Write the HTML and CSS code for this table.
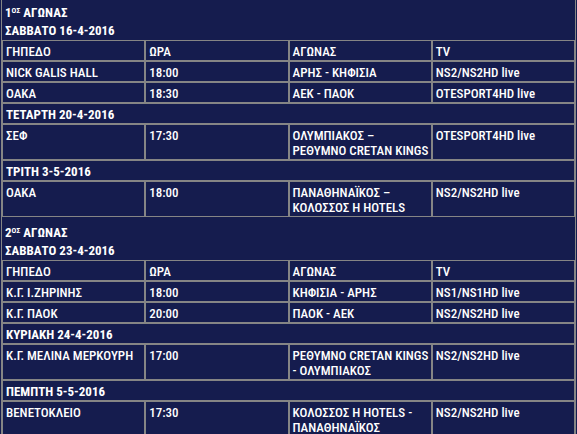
FILE: index.html
```html
<!DOCTYPE html>
<html lang="el">
<head>
<meta charset="utf-8">
<title>Πρόγραμμα αγώνων</title>
<link rel="stylesheet" href="styles.css">
</head>
<body>
<div class="page">
<table class="schedule">
  <colgroup><col><col><col><col></colgroup>
  <tbody>
    <tr class="round"><td colspan="4">1<sup>ΟΣ</sup> ΑΓΩΝΑΣ</td></tr>
    <tr class="day"><td colspan="4">ΣΑΒΒΑΤΟ 16-4-2016</td></tr>
    <tr><td>ΓΗΠΕΔΟ</td><td>ΩΡΑ</td><td>ΑΓΩΝΑΣ</td><td>TV</td></tr>
    <tr><td>NICK GALIS HALL</td><td>18:00</td><td>ΑΡΗΣ - ΚΗΦΙΣΙΑ</td><td>NS2/NS2HD live</td></tr>
    <tr><td>ΟΑΚΑ</td><td>18:30</td><td>ΑΕΚ - ΠΑΟΚ</td><td>OTESPORT4HD live</td></tr>
    <tr class="date"><td colspan="4">ΤΕΤΑΡΤΗ 20-4-2016</td></tr>
    <tr><td>ΣΕΦ</td><td>17:30</td><td>ΟΛΥΜΠΙΑΚΟΣ –<br>ΡΕΘΥΜΝΟ CRETAN KINGS</td><td>OTESPORT4HD live</td></tr>
    <tr class="date"><td colspan="4">ΤΡΙΤΗ 3-5-2016</td></tr>
    <tr><td>ΟΑΚΑ</td><td>18:00</td><td>ΠΑΝΑΘΗΝΑΪΚΟΣ –<br>ΚΟΛΟΣΣΟΣ Η HOTELS</td><td>NS2/NS2HD live</td></tr>
    <tr class="round"><td colspan="4">2<sup>ΟΣ</sup> ΑΓΩΝΑΣ</td></tr>
    <tr class="day"><td colspan="4">ΣΑΒΒΑΤΟ 23-4-2016</td></tr>
    <tr><td>ΓΗΠΕΔΟ</td><td>ΩΡΑ</td><td>ΑΓΩΝΑΣ</td><td>TV</td></tr>
    <tr><td>Κ.Γ. Ι.ΖΗΡΙΝΗΣ</td><td>18:00</td><td>ΚΗΦΙΣΙΑ - ΑΡΗΣ</td><td>NS1/NS1HD live</td></tr>
    <tr><td>Κ.Γ. ΠΑΟΚ</td><td>20:00</td><td>ΠΑΟΚ - ΑΕΚ</td><td>NS2/NS2HD live</td></tr>
    <tr class="date"><td colspan="4">ΚΥΡΙΑΚΗ 24-4-2016</td></tr>
    <tr><td>Κ.Γ. ΜΕΛΙΝΑ ΜΕΡΚΟΥΡΗ</td><td>17:00</td><td>ΡΕΘΥΜΝΟ CRETAN KINGS<br>- ΟΛΥΜΠΙΑΚΟΣ</td><td>NS2/NS2HD live</td></tr>
    <tr class="date"><td colspan="4">ΠΕΜΠΤΗ 5-5-2016</td></tr>
    <tr><td>ΒΕΝΕΤΟΚΛΕΙΟ</td><td>17:30</td><td>ΚΟΛΟΣΣΟΣ Η HOTELS -<br>ΠΑΝΑΘΗΝΑΪΚΟΣ</td><td>NS2/NS2HD live</td></tr>
  </tbody>
</table>
</div>
</body>
</html>
```
FILE: styles.css
```css
html, body {
  margin: 0;
  padding: 0;
  background: #151c4e;
}
.page {
  margin-top: -4px;
  padding-left: 1px;
}
.schedule {
  width: 575px;
  table-layout: fixed;
  border-collapse: separate;
  border-spacing: 0;
  border: 1px solid #858585;
  background: #151c4e;
  color: #ffffff;
  font-family: "Roboto Condensed", "Liberation Sans Narrow", "DejaVu Sans Condensed", sans-serif;
  font-size: 13px;
  line-height: 15px;
}
.schedule td {
  border: 1px solid #858585;
  padding: 3px 3px 1px 3px;
  vertical-align: top;
  text-align: left;
  white-space: nowrap;
  font-weight: 500;
}
.schedule tr.round td,
.schedule tr.day td {
  border: none;
  font-weight: 700;
}
.schedule tr.round td {
  padding: 8px 3px 1px 3px;
}
.schedule tr.day td {
  padding: 2px 3px 2px 3px;
}
.schedule tr.date td {
  font-weight: 700;
}
.schedule sup {
  font-size: 8px;
  line-height: 0;
  vertical-align: 4px;
}
```
